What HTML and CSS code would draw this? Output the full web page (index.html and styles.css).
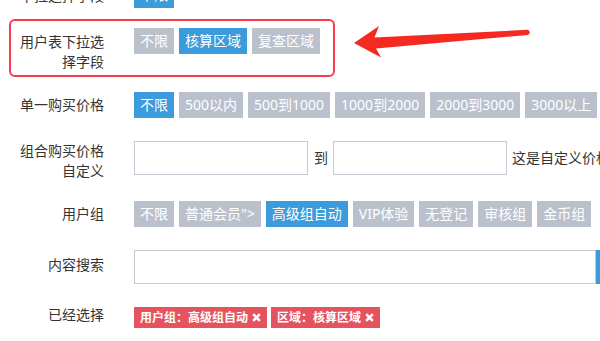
FILE: index.html
```html
<!DOCTYPE html>
<html lang="zh">
<head>
<meta charset="utf-8">
<link rel="stylesheet" href="styles.css">
</head>
<body>
<div class="form">
  <div class="row row-first">
    <div class="label label-tag">下拉选择字段</div>
    <div class="tags"><span class="tag on">不限</span></div>
  </div>
  <div class="row">
    <div class="label label-tag">用户表下拉选择字段</div>
    <div class="tags">
      <span class="tag">不限</span>
      <span class="tag on">核算区域</span>
      <span class="tag">复查区域</span>
    </div>
  </div>
  <div class="row">
    <div class="label label-tag">单一购买价格</div>
    <div class="tags">
      <span class="tag on">不限</span>
      <span class="tag">500以内</span>
      <span class="tag">500到1000</span>
      <span class="tag">1000到2000</span>
      <span class="tag">2000到3000</span>
      <span class="tag">3000以上</span>
    </div>
  </div>
  <div class="row">
    <div class="label label-multi">组合购买价格自定义</div>
    <div class="range">
      <input class="input input-short" type="text">
      <span class="to">到</span>
      <input class="input input-short" type="text">
      <span class="hint">这是自定义价格</span>
    </div>
  </div>
  <div class="row">
    <div class="label label-tag">用户组</div>
    <div class="tags">
      <span class="tag">不限</span>
      <span class="tag">普通会员"&gt;</span>
      <span class="tag on">高级组自动</span>
      <span class="tag">VIP体验</span>
      <span class="tag">无登记</span>
      <span class="tag">审核组</span>
      <span class="tag">金币组</span>
    </div>
  </div>
  <div class="row">
    <div class="label label-input">内容搜索</div>
    <div class="search">
      <input class="input input-long" type="text">
      <span class="search-btn"></span>
    </div>
  </div>
  <div class="row">
    <div class="label label-chosen">已经选择</div>
    <div class="chosen">
      <span class="chip">用户组：高级组自动<svg class="x" viewBox="0 0 9 9"><path d="M1.2 1.2L7.8 7.8M7.8 1.2L1.2 7.8"/></svg></span>
      <span class="chip">区域：核算区域<svg class="x" viewBox="0 0 9 9"><path d="M1.2 1.2L7.8 7.8M7.8 1.2L1.2 7.8"/></svg></span>
    </div>
  </div>
</div>
<div class="highlight"></div>
<svg class="arrow" viewBox="0 0 600 341" width="600" height="341">
  <path d="M354 43 L379 26 L374.5 37.5 L528 29.8 Q531.5 32.4 528 35 L376 48.5 L381 57.5 Z"/>
</svg>
</body>
</html>
```

FILE: styles.css
```css
html, body {
  margin: 0;
  padding: 0;
  background: #fff;
  overflow: hidden;
  width: 600px;
  height: 341px;
  position: relative;
}
body {
  font-family: "Noto Sans", "Noto Sans CJK SC", sans-serif;
  font-size: 14px;
  color: #333;
}
.form {
  display: flex;
  flex-direction: column;
  margin-top: -18px;
  padding-left: 14px;
}
.row {
  display: flex;
  align-items: flex-start;
  margin-bottom: 20px;
}
.row-first {
  margin-bottom: 17px;
}
.label {
  width: 90px;
  flex: none;
  margin-right: 30px;
  text-align: right;
  line-height: 20px;
  color: #333;
}
.label-tag { padding-top: 3.5px; }
.label-multi { padding-top: 0; }
.label-input { padding-top: 5.5px; }
.label-chosen { margin-top: -1.5px; }
.tags {
  display: flex;
  flex-wrap: nowrap;
  gap: 5px;
  padding-bottom: 3px;
}
.tag {
  display: block;
  height: 26px;
  line-height: 26px;
  padding: 0 6px;
  background: #bac1cd;
  color: #fff;
  white-space: nowrap;
}
.tag.on {
  background: #3b9bdb;
}
.range {
  display: flex;
  align-items: center;
  white-space: nowrap;
  padding-bottom: 3px;
}
.input {
  display: block;
  box-sizing: border-box;
  height: 34px;
  border: 1px solid #c3c9d5;
  background: #fff;
  margin: 0;
  padding: 0 6px;
  font: inherit;
  outline: none;
}
.input-short {
  width: 174px;
}
.to {
  margin: 0 5px 0 6px;
  line-height: 20px;
}
.hint {
  margin-left: 5px;
  line-height: 20px;
}
.search {
  display: flex;
  padding-bottom: 3px;
}
.input-long {
  width: 462px;
}
.search-btn {
  display: block;
  width: 40px;
  height: 34px;
  background: #3b9bdb;
}
.chosen {
  display: flex;
  gap: 4px;
}
.chip {
  display: flex;
  align-items: center;
  gap: 4px;
  height: 21px;
  padding: 0 6px;
  background: #e5535f;
  color: #fff;
  font-size: 12px;
  font-weight: bold;
  white-space: nowrap;
}
.x {
  width: 9px;
  height: 9px;
  stroke: #fff;
  stroke-width: 2.6;
  fill: none;
}
.highlight {
  position: absolute;
  left: 9px;
  top: 19px;
  width: 326px;
  height: 58px;
  box-sizing: border-box;
  border: 2.5px solid #fb3a4e;
  border-radius: 6px;
}
.arrow {
  position: absolute;
  left: 0;
  top: 0;
  fill: #f42a20;
}
```
